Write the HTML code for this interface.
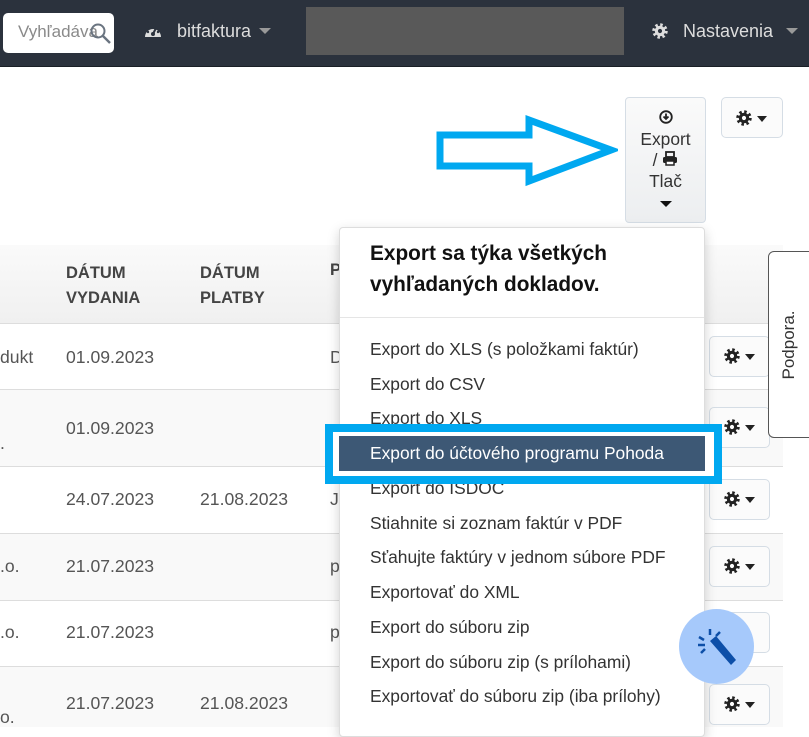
<!DOCTYPE html>
<html><head><meta charset="utf-8"><style>
*{box-sizing:border-box;margin:0;padding:0}
body{width:809px;height:727px;overflow:hidden;position:relative;background:#fff;font-family:"Liberation Sans",sans-serif;color:#333}
.nav{position:absolute;left:0;top:0;width:809px;height:67px;background:#2b323d;border-bottom:1px solid #1a1f26}
.abs{position:absolute}
.row{position:absolute;left:0;width:783px;border-top:1px solid #ddd}
.td{position:absolute;font-size:17.6px;color:#555}
.gbtn{position:absolute;left:709px;width:61px;height:41px;border:1px solid #d5dde5;border-radius:5px;background:#fbfbfb}
.item{position:absolute;left:370px;font-size:17.4px;color:#333}
.gi{position:absolute}
</style></head><body>
<svg width="0" height="0" style="position:absolute"><defs>
<symbol id="gear" viewBox="0 0 20 20"><circle cx="10" cy="10" r="5.8" fill="currentColor"/><circle cx="10" cy="10" r="7" fill="none" stroke="currentColor" stroke-width="3.2" stroke-dasharray="2.75 2.75"/><circle cx="10" cy="10" r="2.3" fill="#fff"/></symbol>
<symbol id="gearW" viewBox="0 0 20 20"><circle cx="10" cy="10" r="5.8" fill="currentColor"/><circle cx="10" cy="10" r="7" fill="none" stroke="currentColor" stroke-width="3.2" stroke-dasharray="2.75 2.75"/><circle cx="10" cy="10" r="2.3" fill="#2b323d"/></symbol>
<symbol id="gb" viewBox="0 0 34 20"><use href="#gear" x="0" y="1" width="18" height="18"/><path d="M22 8h10l-5 6z" fill="currentColor"/></symbol>
</defs></svg>
<div class="nav">
 <div class="abs" style="left:3px;top:13px;width:111px;height:40px;background:#fff;border-radius:5px"></div>
 <div class="abs" style="left:18px;top:22px;font-size:17px;color:#8a8a8a">Vyhľadáva</div>
 <svg class="abs" style="left:89px;top:22px" width="24" height="24" viewBox="0 0 24 24"><circle cx="9" cy="9" r="6.5" fill="none" stroke="#6a7480" stroke-width="2"/><path d="M14 14l7 7" stroke="#6a7480" stroke-width="2.4"/></svg>
 <svg class="abs" style="left:144px;top:23px" width="18" height="16" viewBox="0 0 18 16"><path d="M1 14A8 8 0 1 1 17 14Z" fill="#ddd"/><circle cx="9" cy="11" r="2" fill="#2b323d"/><path d="M9 11L12 5" stroke="#2b323d" stroke-width="2"/><circle cx="4" cy="9" r="1.2" fill="#2b323d"/><circle cx="6" cy="5" r="1.2" fill="#2b323d"/><circle cx="14" cy="9" r="1.2" fill="#2b323d"/></svg>
 <div class="abs" style="left:177px;top:21px;font-size:18px;color:#ddd">bitfaktura</div>
 <div class="abs" style="left:259px;top:28px;border-left:6px solid transparent;border-right:6px solid transparent;border-top:6px solid #999"></div>
 <div class="abs" style="left:306px;top:7px;width:318px;height:48px;background:#595959"></div>
 <svg class="abs" style="left:651px;top:22px;color:#ddd" width="18" height="18"><use href="#gearW"/></svg>
 <div class="abs" style="left:683px;top:21px;font-size:18px;color:#ddd">Nastavenia</div>
 <div class="abs" style="left:786px;top:28px;border-left:6px solid transparent;border-right:6px solid transparent;border-top:6px solid #999"></div>
</div>

<div class="abs" style="left:625px;top:97px;width:81px;height:126px;border:1px solid #d5dde5;border-radius:4px;background:linear-gradient(#fafafa,#eceef0);text-align:center;font-size:17.4px;line-height:21px;padding-top:10px;color:#333">
 <svg width="14" height="14" viewBox="0 0 14 14"><circle cx="7" cy="7" r="5.8" fill="none" stroke="#222" stroke-width="1.8"/><path d="M7 3.5v5M4.5 6.5L7 9l2.5-2.5" stroke="#222" stroke-width="1.8" fill="none"/></svg><br>Export<br>/ <svg width="16" height="15" viewBox="0 0 16 15"><rect x="4" y="1" width="8" height="5" fill="none" stroke="#222" stroke-width="1.8"/><rect x="1" y="6" width="14" height="6" rx="1.5" fill="#222"/><rect x="4" y="10" width="8" height="4" fill="#fff" stroke="#222" stroke-width="1.5"/></svg><br>Tlač<br><svg width="12" height="10"><path d="M0 3h12l-6 6z" fill="#111"/></svg>
</div>
<div class="abs" style="left:721px;top:97px;width:62px;height:41px;border:1px solid #d5dde5;border-radius:5px;background:#fbfbfb"></div>
<svg class="gi" style="left:735px;top:108px;color:#222" width="34" height="20"><use href="#gb"/></svg>

<svg class="abs" style="left:434px;top:114px" width="184" height="74" viewBox="0 0 184 74"><path d="M6 21H95V6L177 36L95 67V52H6Z" fill="none" stroke="#00a8f0" stroke-width="7"/></svg>

<div class="abs" style="left:0;top:245px;width:783px;height:78px;background:linear-gradient(#fafafa,#f0f0f0)"></div>
<div class="td" style="left:66px;top:261px;font-weight:bold;font-size:16.5px;line-height:25px;color:#444">DÁTUM<br>VYDANIA</div>
<div class="td" style="left:200px;top:261px;font-weight:bold;font-size:16.5px;line-height:25px;color:#444">DÁTUM<br>PLATBY</div>
<div class="td" style="left:330px;top:261px;font-weight:bold;font-size:16.5px;color:#444">P</div>

<div class="row" style="top:323px;height:66px;background:#fff"></div>
<div class="row" style="top:389px;height:77px;background:#f9f9f9"></div>
<div class="row" style="top:466px;height:67px;background:#fff"></div>
<div class="row" style="top:533px;height:67px;background:#f9f9f9"></div>
<div class="row" style="top:600px;height:66px;background:#fff"></div>
<div class="row" style="top:666px;height:61px;background:#f9f9f9"></div>

<div class="td" style="left:0;top:347px">dukt</div><div class="td" style="left:66px;top:347px">01.09.2023</div><div class="td" style="left:330px;top:347px">D</div>
<div class="td" style="left:0;top:433px">.</div><div class="td" style="left:66px;top:418px">01.09.2023</div>
<div class="td" style="left:66px;top:489px">24.07.2023</div><div class="td" style="left:200px;top:489px">21.08.2023</div><div class="td" style="left:330px;top:489px">J</div>
<div class="td" style="left:0;top:556px">.o.</div><div class="td" style="left:66px;top:556px">21.07.2023</div><div class="td" style="left:330px;top:556px">p</div>
<div class="td" style="left:0;top:622px">.o.</div><div class="td" style="left:66px;top:622px">21.07.2023</div><div class="td" style="left:330px;top:622px">p</div>
<div class="td" style="left:66px;top:693px">21.07.2023</div><div class="td" style="left:200px;top:693px">21.08.2023</div><div class="td" style="left:0;top:707px">o.</div>

<div class="gbtn" style="top:336px"></div><div class="gbtn" style="top:407px"></div><div class="gbtn" style="top:479px"></div><div class="gbtn" style="top:546px"></div><div class="gbtn" style="top:612px"></div><div class="gbtn" style="top:684px"></div>
<svg class="gi" style="left:723px;top:346px;color:#222" width="34" height="20"><use href="#gb"/></svg>
<svg class="gi" style="left:723px;top:417px;color:#222" width="34" height="20"><use href="#gb"/></svg>
<svg class="gi" style="left:723px;top:489px;color:#222" width="34" height="20"><use href="#gb"/></svg>
<svg class="gi" style="left:723px;top:556px;color:#222" width="34" height="20"><use href="#gb"/></svg>
<svg class="gi" style="left:723px;top:694px;color:#222" width="34" height="20"><use href="#gb"/></svg>

<div class="abs" style="left:768px;top:251px;width:50px;height:187px;border:1px solid #555;border-radius:6px;background:#fff"></div>
<div class="abs" style="left:744px;top:335px;width:90px;transform:rotate(-90deg);font-size:17px;color:#333;text-align:center">Podpora.</div>

<div class="abs" style="left:339px;top:227px;width:366px;height:510px;background:#fff;border:1px solid #ddd;border-radius:4px;box-shadow:0 4px 12px rgba(0,0,0,.18)"></div>
<div class="abs" style="left:370px;top:238px;font-size:20.8px;font-weight:bold;line-height:31px;color:#111">Export sa týka všetkých<br>vyhľadaných dokladov.</div>
<div class="abs" style="left:340px;top:317px;width:364px;height:1px;background:#e5e5e5"></div>
<div class="item" style="top:339px">Export do XLS (s položkami faktúr)</div>
<div class="item" style="top:374px">Export do CSV</div>
<div class="item" style="top:408px">Export do XLS</div>
<div class="item" style="top:478px">Export do ISDOC</div>
<div class="item" style="top:513px">Stiahnite si zoznam faktúr v PDF</div>
<div class="item" style="top:547px">Sťahujte faktúry v jednom súbore PDF</div>
<div class="item" style="top:582px">Exportovať do XML</div>
<div class="item" style="top:617px">Export do súboru zip</div>
<div class="item" style="top:652px">Export do súboru zip (s prílohami)</div>
<div class="item" style="top:686px">Exportovať do súboru zip (iba prílohy)</div>
<div class="abs" style="left:325px;top:424px;width:397px;height:60px;border:8px solid #00a8f0;background:#fff"></div>
<div class="abs" style="left:339px;top:436px;width:366px;height:35px;background:#3d5875"></div>
<div class="item" style="top:443px;color:#fff">Export do účtového programu Pohoda</div>

<div class="abs" style="left:679px;top:609px;width:75px;height:75px;border-radius:50%;background:#a6c9fb"></div>
<svg class="abs" style="left:696px;top:627px" width="44" height="44" viewBox="0 0 44 44"><path d="M14 14l6-5 20 24-5 5z" fill="#0d4fa8"/><path d="M14 2v6M3 10l5 3M24 5l-4 4M2 18h7M5 26l4-4" stroke="#0d4fa8" stroke-width="2.5"/></svg>
</body></html>
